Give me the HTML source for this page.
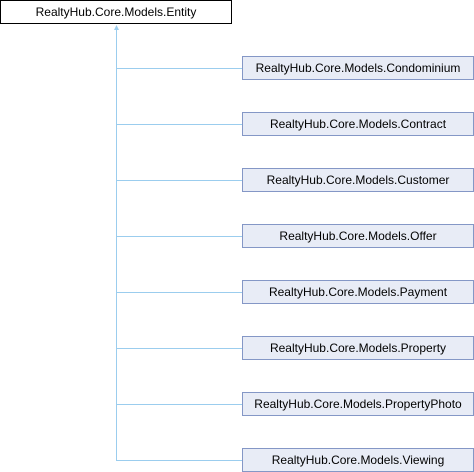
<!DOCTYPE html>
<html><head><style>
body{margin:0;width:474px;height:472px;background:#fff;position:relative;overflow:hidden;font-family:"Liberation Sans",Arial,sans-serif;font-size:12px;}
.b{position:absolute;box-sizing:border-box;height:24px;line-height:22px;text-align:center;color:#000;white-space:nowrap}
.e{left:0;top:0;width:232px;border:1px solid #000;background:#fff}
.c{left:242px;width:232px;border:1px solid #8497c6;background:#e8ecf6}
svg{position:absolute;left:0;top:0}
</style></head><body>
<svg width="474" height="472">
<g stroke="#9bcdee" stroke-width="1" fill="none">
<line x1="116.5" y1="26" x2="116.5" y2="460"/>
<line x1="116" y1="68.5" x2="242" y2="68.5"/>
<line x1="116" y1="124.5" x2="242" y2="124.5"/>
<line x1="116" y1="180.5" x2="242" y2="180.5"/>
<line x1="116" y1="236.5" x2="242" y2="236.5"/>
<line x1="116" y1="292.5" x2="242" y2="292.5"/>
<line x1="116" y1="348.5" x2="242" y2="348.5"/>
<line x1="116" y1="404.5" x2="242" y2="404.5"/>
<line x1="116" y1="460.5" x2="242" y2="460.5"/>
</g>
<polygon points="116.5,25 114,30 119,30" fill="#9bcdee"/>
</svg>
<div class="b e">RealtyHub.Core.Models.Entity</div>
<div class="b c" style="top:56px">RealtyHub.Core.Models.Condominium</div>
<div class="b c" style="top:112px">RealtyHub.Core.Models.Contract</div>
<div class="b c" style="top:168px">RealtyHub.Core.Models.Customer</div>
<div class="b c" style="top:224px">RealtyHub.Core.Models.Offer</div>
<div class="b c" style="top:280px">RealtyHub.Core.Models.Payment</div>
<div class="b c" style="top:336px">RealtyHub.Core.Models.Property</div>
<div class="b c" style="top:392px">RealtyHub.Core.Models.PropertyPhoto</div>
<div class="b c" style="top:448px">RealtyHub.Core.Models.Viewing</div>
</body></html>
